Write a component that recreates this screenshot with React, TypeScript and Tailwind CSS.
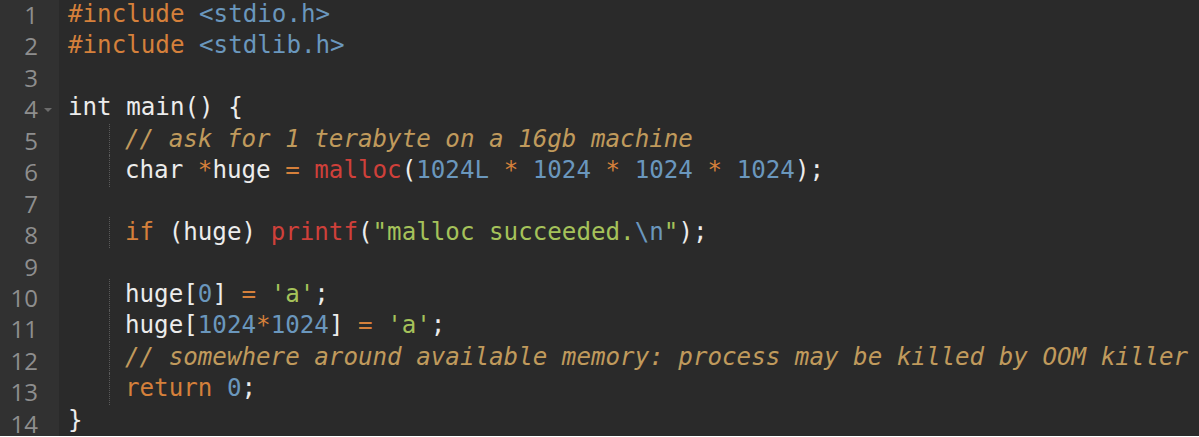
import React from "react"

type Tok = [string, string]

const C = {
  kw: "text-[#d5803b]",
  inc: "text-[#6a97bd]",
  num: "text-[#6a97bd]",
  fn: "text-[#cf403a]",
  str: "text-[#a5c25a]",
  cm: "text-[#c09a5c] italic",
  tx: "text-[#ececec]",
}

const lines: { indent: boolean; fold?: boolean; toks: Tok[] }[] = [
  { indent: false, toks: [[C.kw, "#include"], [C.tx, " "], [C.inc, "<stdio.h>"]] },
  { indent: false, toks: [[C.kw, "#include"], [C.tx, " "], [C.inc, "<stdlib.h>"]] },
  { indent: false, toks: [] },
  { indent: false, fold: true, toks: [[C.tx, "int main() {"]] },
  { indent: true, toks: [[C.cm, "// ask for 1 terabyte on a 16gb machine"]] },
  {
    indent: true,
    toks: [
      [C.tx, "char "],
      [C.kw, "*"],
      [C.tx, "huge "],
      [C.kw, "="],
      [C.tx, " "],
      [C.fn, "malloc"],
      [C.tx, "("],
      [C.num, "1024L"],
      [C.tx, " "],
      [C.kw, "*"],
      [C.tx, " "],
      [C.num, "1024"],
      [C.tx, " "],
      [C.kw, "*"],
      [C.tx, " "],
      [C.num, "1024"],
      [C.tx, " "],
      [C.kw, "*"],
      [C.tx, " "],
      [C.num, "1024"],
      [C.tx, ");"],
    ],
  },
  { indent: false, toks: [] },
  {
    indent: true,
    toks: [
      [C.kw, "if"],
      [C.tx, " (huge) "],
      [C.fn, "printf"],
      [C.tx, "("],
      [C.str, "\"malloc succeeded."],
      [C.inc, "\\n"],
      [C.str, "\""],
      [C.tx, ");"],
    ],
  },
  { indent: false, toks: [] },
  {
    indent: true,
    toks: [
      [C.tx, "huge["],
      [C.num, "0"],
      [C.tx, "] "],
      [C.kw, "="],
      [C.tx, " "],
      [C.str, "'a'"],
      [C.tx, ";"],
    ],
  },
  {
    indent: true,
    toks: [
      [C.tx, "huge["],
      [C.num, "1024"],
      [C.kw, "*"],
      [C.num, "1024"],
      [C.tx, "] "],
      [C.kw, "="],
      [C.tx, " "],
      [C.str, "'a'"],
      [C.tx, ";"],
    ],
  },
  {
    indent: true,
    toks: [[C.cm, "// somewhere around available memory: process may be killed by OOM killer"]],
  },
  { indent: true, toks: [[C.kw, "return"], [C.tx, " "], [C.num, "0"], [C.tx, ";"]] },
  { indent: false, toks: [[C.tx, "}"]] },
]

const App = () => {
  return (
    <div className="w-[1199px] h-[437px] overflow-hidden flex bg-[#2a2a2a] font-['DejaVu_Sans_Mono',monospace] text-[24.2px] leading-[31.45px] -mt-[1px]">
      {/* gutter */}
      <div className="w-[59px] shrink-0 bg-[#313131] flex flex-col">
        {lines.map((l, i) => (
          <div key={i} className="flex h-[31.45px] items-center">
            <span className="w-[38px] text-right text-[#8e8e8e] font-['Open_Sans',sans-serif] text-[24px]">
              {i + 1}
            </span>
            {l.fold && (
              <svg width="10" height="8" viewBox="0 0 10 8" className="ml-[5px] mt-[2px]">
                <path d="M1 2 L5 6 L9 2 Z" fill="#6c6c6c" />
              </svg>
            )}
          </div>
        ))}
      </div>

      {/* code */}
      <div className="flex flex-col pl-[9px] whitespace-pre">
        {lines.map((l, i) => (
          <div key={i} className="h-[31.45px] flex">
            {l.indent && (
              <div className="w-[42px] shrink-0 border-r border-dotted border-[#5a5a5a] mr-[15px]" />
            )}
            <span>
              {l.toks.map(([c, t], j) => (
                <span key={j} className={c}>
                  {t}
                </span>
              ))}
            </span>
          </div>
        ))}
      </div>
    </div>
  )
}

export default App
